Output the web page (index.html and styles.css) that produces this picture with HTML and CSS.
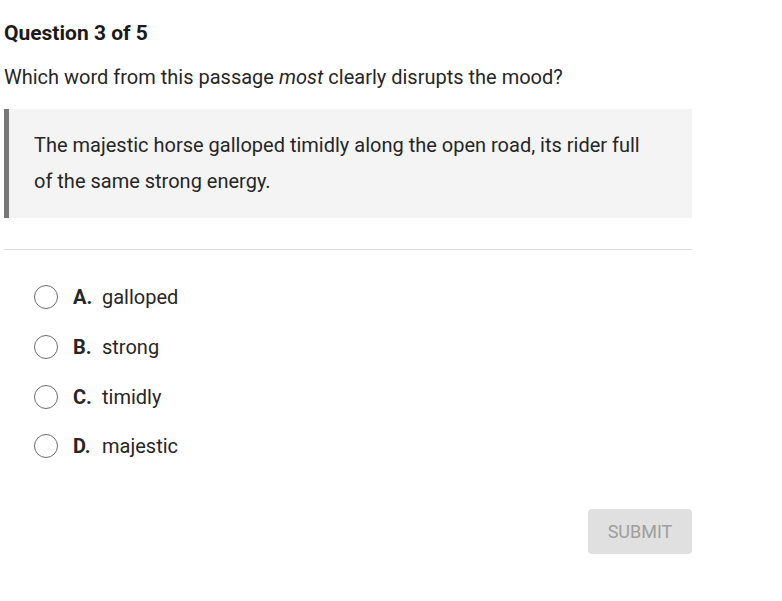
FILE: index.html
```html
<!DOCTYPE html>
<html lang="en">
<head>
    <meta charset="UTF-8">
    <meta name="viewport" content="width=device-width, initial-scale=1.0">
    <title>Question 3 of 5</title>
    <link rel="stylesheet" href="styles.css">
</head>
<body>
    <div class="quiz">
        <h1>Question 3 of 5</h1>
        <p class="prompt">Which word from this passage <em>most</em> clearly disrupts the mood?</p>
        <div class="passage">
            The majestic horse galloped timidly along the open road, its rider full of the same strong energy.
        </div>
        <hr class="divider">
        <form class="options">
            <label class="option">
                <span class="radio"></span>
                <span class="letter">A.</span>
                <span class="answer">galloped</span>
            </label>
            <label class="option">
                <span class="radio"></span>
                <span class="letter">B.</span>
                <span class="answer">strong</span>
            </label>
            <label class="option">
                <span class="radio"></span>
                <span class="letter">C.</span>
                <span class="answer">timidly</span>
            </label>
            <label class="option">
                <span class="radio"></span>
                <span class="letter">D.</span>
                <span class="answer">majestic</span>
            </label>
        </form>
        <div class="actions">
            <button type="button" class="submit" disabled>SUBMIT</button>
        </div>
    </div>
</body>
</html>
```

FILE: styles.css
```css
/* Page */
body {
    margin: 0;
    background: #fff;
    font-family: Roboto, "Liberation Sans", Arial, sans-serif;
    color: #262626;
}
.quiz {
    width: 688px;
    margin-left: 4px;
}
h1 {
    font-size: 21px;
    line-height: 24px;
    font-weight: bold;
    margin: 21px 0 0;
    color: #1a1a1a;
}
.prompt {
    font-size: 20px;
    line-height: 24px;
    margin: 20px 0 0;
}
/* Passage block */
.passage {
    margin-top: 20px;
    background: #f4f4f4;
    border-left: 5px solid #767676;
    padding: 18px 40px 19px 25px;
    font-size: 20px;
    line-height: 36px;
}
.divider {
    margin: 31px 0 0;
    border: none;
    border-top: 1px solid #dcdcdc;
}
/* Answer choices */
.options {
    margin-top: 22px;
    padding-left: 30px;
}
.option {
    display: flex;
    align-items: center;
    height: 50px;
    font-size: 20px;
    cursor: pointer;
}
.option:nth-child(n+3) {
    height: 49.5px;
}
.radio {
    width: 22px;
    height: 22px;
    border: 1.5px solid #6c6c6c;
    border-radius: 50%;
    margin-right: 15px;
}
.letter {
    width: 29px;
    font-weight: bold;
}
/* Submit */
.actions {
    display: flex;
    justify-content: flex-end;
    margin-top: 38px;
}
.submit {
    width: 104px;
    height: 45px;
    border: none;
    border-radius: 4px;
    background: #e0e0e0;
    color: #9e9e9e;
    font-family: inherit;
    font-size: 18px;
}
```
